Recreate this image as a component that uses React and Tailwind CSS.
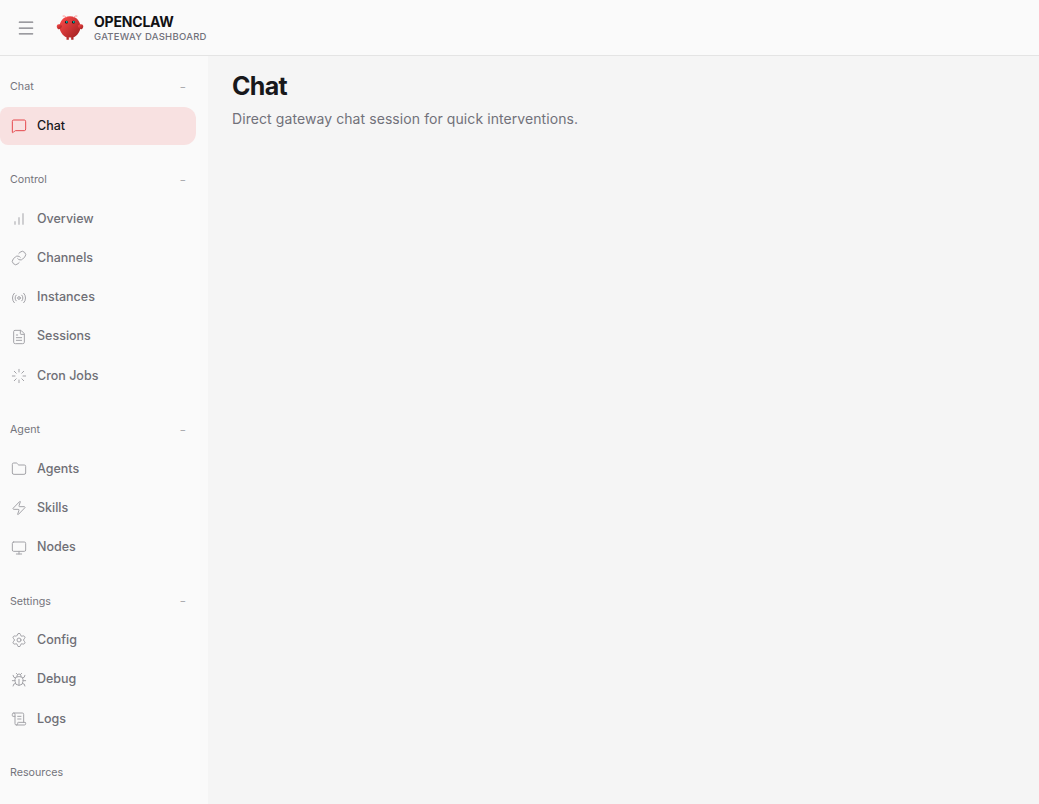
import {
  Menu,
  MessageSquare,
  Link,
  Radio,
  FileText,
  Loader,
  Folder,
  Zap,
  Monitor,
  Settings,
  Bug,
  ScrollText,
} from 'lucide-react';

function BarsIcon({ className }) {
  return (
    <svg
      width="16"
      height="16"
      viewBox="0 0 24 24"
      fill="none"
      stroke="currentColor"
      strokeWidth="1.5"
      strokeLinecap="round"
      className={className}
    >
      <path d="M18 20V4" />
      <path d="M12 20V10" />
      <path d="M6 20v-4" />
    </svg>
  );
}

const groups = [
  { label: 'Chat', items: [{ label: 'Chat', icon: MessageSquare, active: true }] },
  {
    label: 'Control',
    items: [
      { label: 'Overview', icon: BarsIcon },
      { label: 'Channels', icon: Link },
      { label: 'Instances', icon: Radio },
      { label: 'Sessions', icon: FileText },
      { label: 'Cron Jobs', icon: Loader },
    ],
  },
  {
    label: 'Agent',
    items: [
      { label: 'Agents', icon: Folder },
      { label: 'Skills', icon: Zap },
      { label: 'Nodes', icon: Monitor },
    ],
  },
  {
    label: 'Settings',
    items: [
      { label: 'Config', icon: Settings },
      { label: 'Debug', icon: Bug },
      { label: 'Logs', icon: ScrollText },
    ],
  },
];

function Mascot() {
  return (
    <svg width="28" height="28" viewBox="0 0 120 120">
      <defs>
        <linearGradient id="body" x1="0" y1="0" x2="1" y2="1">
          <stop offset="0%" stopColor="#ff4d4d" />
          <stop offset="100%" stopColor="#991b1b" />
        </linearGradient>
      </defs>
      <path d="M60 10C30 10 15 35 15 55c0 20 15 40 30 45v10h10v-10s5 2 10 0v10h10v-10c15-5 30-25 30-45 0-20-15-45-45-45Z" fill="url(#body)" />
      <path d="M20 45C5 40 0 50 5 60c5 10 15 5 20-5 2-5-2-8-5-10Z" fill="url(#body)" />
      <path d="M100 45c15-5 20 5 15 15-5 10-15 5-20-5-2-5 2-8 5-10Z" fill="url(#body)" />
      <path d="M45 15Q35 5 30 8" stroke="#ff6b6b" strokeWidth="3" strokeLinecap="round" fill="none" />
      <path d="M75 15Q85 5 90 8" stroke="#ff6b6b" strokeWidth="3" strokeLinecap="round" fill="none" />
      <circle cx="45" cy="35" r="6" fill="#050810" />
      <circle cx="75" cy="35" r="6" fill="#050810" />
      <circle cx="46" cy="34" r="4" fill="#00c9b4" />
      <circle cx="76" cy="34" r="4" fill="#00c9b4" />
    </svg>
  );
}

function NavItem({ item }) {
  const Icon = item.icon;
  return (
    <div
      className={`flex h-[38.3px] items-center gap-2.5 rounded-r-xl rounded-l-lg pl-[11px] text-[12.5px] font-medium ${
        item.active ? 'bg-[#f8e1e1] text-[#18181b]' : 'text-[#6f6f76]'
      }`}
    >
      <Icon
        size={16}
        strokeWidth={1.5}
        className={item.active ? 'text-[#e5484d]' : 'text-[#a3a3a8]'}
      />
      <span>{item.label}</span>
    </div>
  );
}

function NavGroup({ group }) {
  return (
    <div className="flex flex-col">
      <div className="mb-[6.5px] flex h-7 items-center justify-between pt-0.5 pl-2.5 pr-[10px] text-[10.7px] text-[#74747c]">
        <span>{group.label}</span>
        <span className="-translate-y-px text-[10px] text-[#a3a3a8]">−</span>
      </div>
      <div className="flex flex-col gap-px">
        {group.items.map((item) => (
          <NavItem key={item.label} item={item} />
        ))}
      </div>
    </div>
  );
}

export default function App() {
  return (
    <div className="flex h-[804px] w-full flex-col overflow-hidden bg-[#f5f5f5] font-['Inter',sans-serif]">
      <header className="flex h-14 shrink-0 items-center border-b border-[#e4e4e4] bg-[#fafafa] pl-4">
        <Menu size={20} strokeWidth={1.5} className="text-[#7c7c82]" />
        <div className="ml-[20px] flex items-center gap-2.5">
          <Mascot />
          <div className="flex flex-col">
            <span className="text-sm leading-[18px] font-bold tracking-[-0.2px] text-[#111114]">OPENCLAW</span>
            <span className="text-[9.5px] leading-3 font-medium tracking-[0.27px] text-[#71717a]">
              GATEWAY DASHBOARD
            </span>
          </div>
        </div>
      </header>

      <div className="flex min-h-0 flex-1">
        <aside className="w-[208px] shrink-0 overflow-hidden bg-[#fafafa] pt-[16.5px] pr-3">
          <div className="flex flex-col gap-5">
            {groups.map((group) => (
              <NavGroup key={group.label} group={group} />
            ))}
            <div className="flex h-7 items-center pt-0.5 pl-2.5 text-[10.7px] text-[#74747c]">Resources</div>
          </div>
        </aside>

        <main className="flex-1 px-6 pt-[14px]">
          <h1 className="text-[25px] leading-8 font-bold tracking-[-0.7px] text-[#18181b]">Chat</h1>
          <p className="mt-[6.5px] text-sm leading-5 tracking-[0.08px] text-[#71717a]">
            Direct gateway chat session for quick interventions.
          </p>
        </main>
      </div>
    </div>
  );
}
